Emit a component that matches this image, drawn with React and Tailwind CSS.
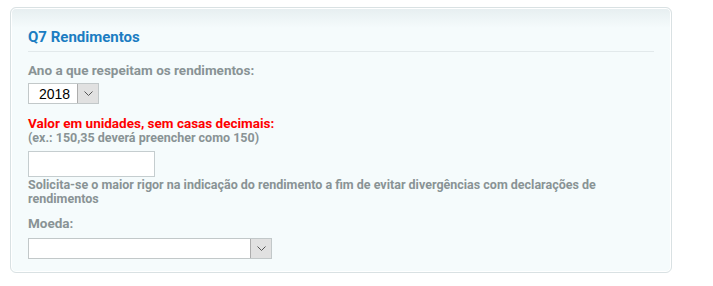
import React from 'react';

const Chevron = () => (
  <svg width="9" height="6" viewBox="0 0 9 6" fill="none">
    <path d="M0.5 0.5 L4.5 4.5 L8.5 0.5" stroke="#555" strokeWidth="1" />
  </svg>
);

const App = () => {
  return (
    <div className="w-[713px] h-[286px] bg-white pt-[7px] pl-[10px] font-['Roboto',sans-serif]">
      <div className="w-[662px] h-[266px] rounded-[6px] border border-[#d9e1e3] bg-[linear-gradient(#e6eef0,#f5fbfc_20px)] shadow-[inset_0_0_0_1px_#ffffff] px-[17px] pt-[21px]">
        {/* Título */}
        <div className="border-b border-[#e2e9eb] pb-[6px]">
          <h2 className="text-[15px] leading-[16px] font-bold text-[#1b7dc2]">Q7 Rendimentos</h2>
        </div>

        <p className="mt-[10px] text-[13.5px] leading-[16px] font-bold text-[#899395]">
          Ano a que respeitam os rendimentos:
        </p>
        <div className="mt-[5px] flex w-[71px] h-[21px] border border-[#c2c8c9] bg-white">
          <span className="flex-1 pl-[10px] text-[14px] leading-[20px] text-black font-['Liberation_Sans',sans-serif]">2018</span>
          <span className="w-[21px] h-full flex items-center justify-center bg-[#e1e1e1] border-l border-[#adadad]">
            <Chevron />
          </span>
        </div>

        <p className="mt-[11px] text-[13.5px] leading-[16px] font-bold text-[#ff0000]">
          Valor em unidades, sem casas decimais:
        </p>
        <p className="text-[12.5px] leading-[13px] font-bold text-[#899395]">
          (ex.: 150,35 deverá preencher como 150)
        </p>
        <div className="mt-[7px] w-[127px] h-[26px] border border-[#c5cdcf] bg-white" />
        <p className="mt-[1px] w-[600px] text-[12.5px] leading-[14px] font-bold text-[#899395]">
          Solicita-se o maior rigor na indicação do rendimento a fim de evitar divergências com declarações de rendimentos
        </p>

        <p className="mt-[9px] text-[13.5px] leading-[16px] font-bold text-[#899395]">Moeda:</p>
        <div className="mt-[7px] flex w-[244px] h-[21px] border border-[#c2c8c9] bg-white">
          <span className="flex-1" />
          <span className="w-[21px] h-full flex items-center justify-center bg-[#e1e1e1] border-l border-[#adadad]">
            <Chevron />
          </span>
        </div>
      </div>
    </div>
  );
};

export default App;
